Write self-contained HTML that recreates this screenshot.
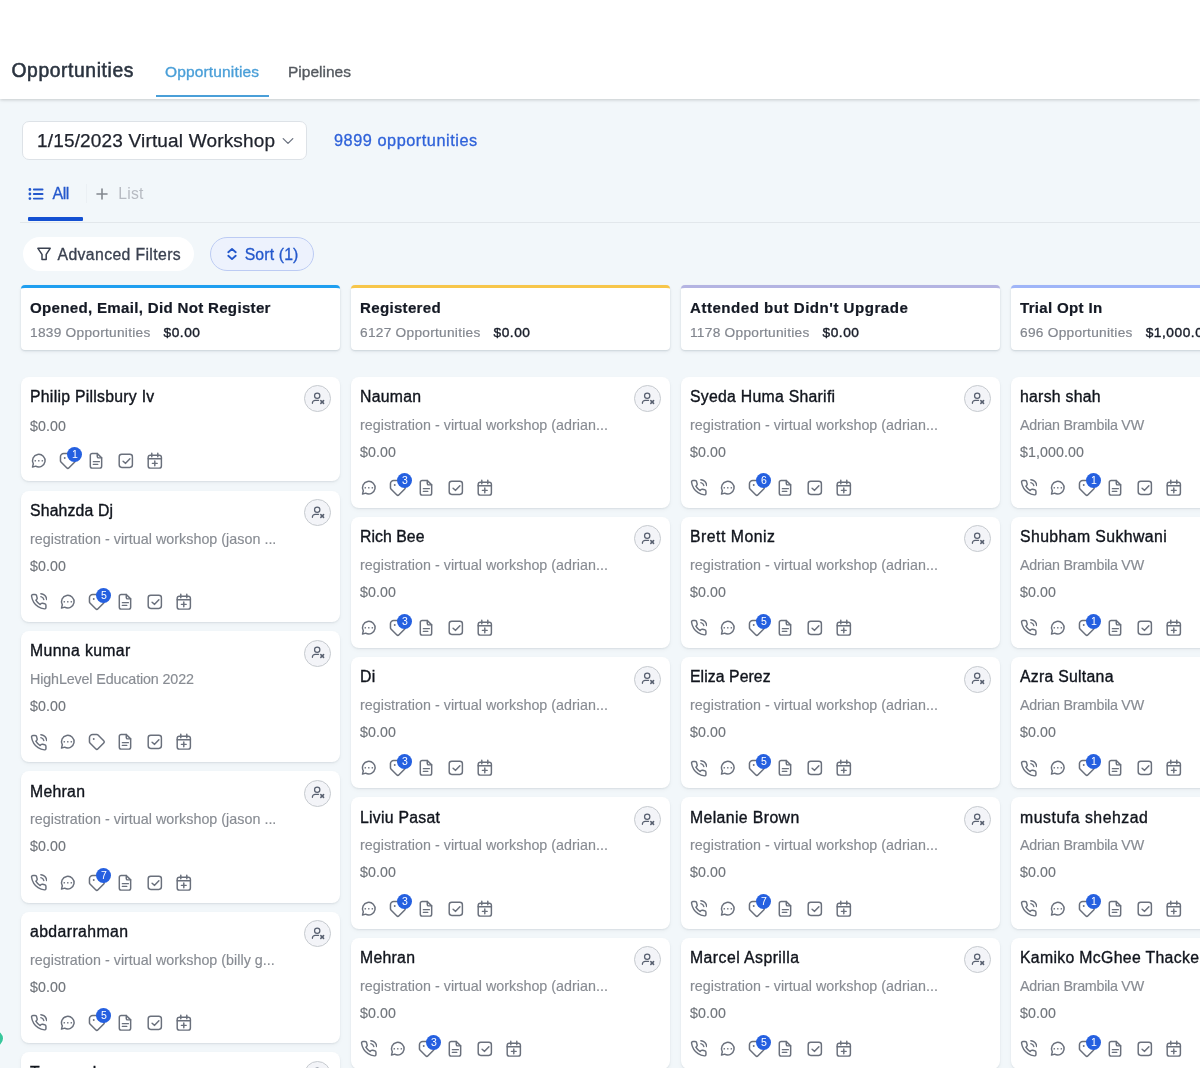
<!DOCTYPE html><html lang="en"><head><meta charset="utf-8"><title>Opportunities</title><style>
*{box-sizing:border-box;margin:0;padding:0}
html,body{width:1200px;height:1068px;overflow:hidden}
body{will-change:transform;background:#f2f7fa;font-family:"Liberation Sans",sans-serif;position:relative;color:#1f2937}
svg{fill:none;stroke:currentColor;stroke-linecap:round;stroke-linejoin:round}
.hdr{position:absolute;left:0;top:0;width:1200px;height:99px;background:#fff;box-shadow:0 1px 3px rgba(0,0,0,.15),0 2px 5px rgba(0,0,0,.04)}
.title{position:absolute;left:11.500px;top:58.500px;font-size:19.300px;line-height:24px;letter-spacing:.6px;color:#2b3440;-webkit-text-stroke:.55px #2b3440;white-space:nowrap}
.tab{position:absolute;top:61.900px;font-size:15.500px;line-height:20px;letter-spacing:.15px;color:#54595f;white-space:nowrap;-webkit-text-stroke:.35px currentColor}
.tab.act{left:165px;color:#4a9fd8}
.tab.t2{left:288px;letter-spacing:0}
.tul{position:absolute;left:156.300px;top:94.500px;width:113.200px;height:2.800px;background:#4a9fd8}
.sel{position:absolute;left:22px;top:120.500px;width:284.500px;height:39px;background:#fff;border:1px solid #dde2e7;border-radius:7px;color:#20242e}
.sel span{position:absolute;left:14px;top:7.400px;font-size:19px;line-height:24px;letter-spacing:.17px;white-space:nowrap;-webkit-text-stroke:.25px currentColor}
.sel svg{position:absolute;left:258.500px;top:13.700px;width:12px;height:12px;stroke:#6b7280;stroke-width:1.300}
.cnt{position:absolute;left:334px;top:130.100px;font-size:16.300px;line-height:20px;letter-spacing:.54px;color:#2f62d9;-webkit-text-stroke:.3px currentColor;white-space:nowrap}
.vt{position:absolute;top:183.600px;font-size:16px;line-height:20px;white-space:nowrap}
.vt svg{position:absolute;top:2px;width:16px;height:16px}
.vt.all{left:28.300px;color:#2458cc;-webkit-text-stroke:.3px currentColor}
.vt.all svg{left:0;top:2px}
.vt.all span{margin-left:24.200px;letter-spacing:-.5px}
.vt.lst{left:94px;color:#b7bbc2}
.vt.lst svg{left:0;top:2px;stroke:#83888f}
.vt.lst span{margin-left:24.300px;letter-spacing:.2px;font-size:15.700px}
.vsep{position:absolute;left:86px;top:184px;width:1px;height:19px;background:#ebf0f4}
.vul{position:absolute;left:27.600px;top:217.400px;width:55.400px;height:3.400px;background:#1450d2;border-radius:1px}
.vline{position:absolute;left:20px;top:221.700px;width:1180px;height:1px;background:#e2e7eb}
.pill{position:absolute;top:237px;height:33.500px;border-radius:17px;font-size:15.800px;white-space:nowrap}
.pill span{position:absolute;top:7.700px;line-height:20px;-webkit-text-stroke:.3px currentColor}
.pill svg{position:absolute}
.flt{left:22.800px;width:171.700px;background:#fff;color:#3a4150}
.flt svg{left:13.200px;top:9.200px;width:16px;height:16px;stroke-width:1.500}
.flt span{left:34.700px;letter-spacing:.37px}
.srt{left:210px;width:103.700px;background:#edf2fd;border:1px solid #bccbf3;color:#2458cc}
.srt svg{left:13px;top:8.300px;width:16px;height:16px}
.srt span{left:33.700px;top:6.700px;letter-spacing:.14px}
.board{position:absolute;left:0;top:0;width:1200px;height:1068px;overflow:hidden}
.col{position:absolute;top:285px;width:319.500px}
.ch{height:65px;background:#fff;border-top:3px solid #000;border-radius:4px;box-shadow:0 1px 2px rgba(40,60,80,.16),0 2px 4px rgba(40,60,80,.05);position:relative}
.ct{position:absolute;left:9.500px;top:9.700px;font-size:15.100px;font-weight:bold;line-height:20px;letter-spacing:.3px;color:#141924;-webkit-text-stroke:.2px currentColor;white-space:nowrap}
.cs{position:absolute;left:9.500px;top:35.600px;font-size:13.700px;line-height:18px;color:#83878f;white-space:nowrap;letter-spacing:.27px}
.cs span{-webkit-text-stroke:.2px currentColor}
.cs b{margin-left:13px;color:#171c28;font-weight:normal;-webkit-text-stroke:.4px #171c28;letter-spacing:.55px}
.cards{margin-top:26.600px}
.card{position:relative;height:131.200px;margin-bottom:9.100px;background:#fff;border-radius:8px;box-shadow:0 1px 2px rgba(40,60,80,.10),0 2px 5px rgba(40,60,80,.04)}
.card.nosub{height:104.800px;margin-bottom:9.400px}
.nm{position:absolute;left:9.500px;top:10.300px;font-size:15.800px;line-height:20px;letter-spacing:.27px;color:#10141c;white-space:nowrap;-webkit-text-stroke:.35px currentColor}
.sb{position:absolute;left:9.500px;top:39px;font-size:14.300px;line-height:18px;letter-spacing:.02px;color:#888c93;white-space:nowrap;-webkit-text-stroke:.15px currentColor}
.pr{position:absolute;left:9.500px;top:66px;font-size:14.200px;line-height:18px;letter-spacing:.1px;color:#71767c;white-space:nowrap;-webkit-text-stroke:.15px currentColor}
.nosub .pr{top:40.600px}
.ux{position:absolute;left:283.800px;top:8.600px;width:27px;height:27px;border-radius:14px;border:1px solid #c6cacf;background:#f3f4f8;color:#586070}
.ux svg{position:absolute;left:-.5px;top:-.5px;width:26px;height:26px;stroke-width:1.250}
.icons{position:absolute;left:0;top:101.100px;width:200px;height:20px}
.nosub .icons{top:74.700px}
.ic{position:absolute;color:#6a707c}
.bd{position:absolute;top:-4.300px;width:15px;height:15px;border-radius:8px;background:#2560e0;color:#fff;font-size:10.500px;line-height:15px;text-align:center;font-weight:normal}
.gdot{position:absolute;left:-12.200px;top:1030.900px;width:15px;height:15px;border-radius:8px;background:#38c79c;box-shadow:0 0 0 1px rgba(255,255,255,.6)}

</style></head><body>
<div class="hdr">
  <div class="title">Opportunities</div>
  <div class="tab act">Opportunities</div>
  <div class="tab t2">Pipelines</div>
  <div class="tul"></div>
</div>
<div class="sel"><span>1/15/2023 Virtual Workshop</span><svg viewBox="0 0 12 12"><path d="M1.200 3.600l4.800 4.800 4.800-4.800"/></svg></div>
<div class="cnt">9899 opportunities</div>
<div class="vt all"><svg viewBox="0 0 16 16"><path d="M5.800 3.500h8.800M5.800 8h8.800M5.800 12.600h8.800" stroke-width="1.800"/><path d="M1.900 3.500h.01M1.900 8h.01M1.900 12.600h.01" stroke-width="2.800"/></svg><span>All</span></div>
<div class="vsep"></div>
<div class="vt lst"><svg viewBox="0 0 16 16"><path d="M8 3v10M3 8h10" stroke-width="1.600"/></svg><span>List</span></div>
<div class="vul"></div>
<div class="vline"></div>
<div class="pill flt"><svg viewBox="0 0 16 16"><path d="M1.900 2.300h12.300L10.200 8.300v5.300H6V8.300z"/></svg><span>Advanced Filters</span></div>
<div class="pill srt"><svg viewBox="0 0 16 16"><path d="M4.300 6.200L8 2.900l3.700 3.300M4.300 9.800L8 13.100l3.700-3.300" stroke-width="1.900"/></svg><span>Sort (1)</span></div>

<div class="board">
<div class="col" style="left:20.5px">
<div class="ch" style="border-top-color:#1f9ff0"><div class="ct">Opened, Email, Did Not Register</div><div class="cs"><span>1839 Opportunities</span><b>$0.00</b></div></div>
<div class="cards">
<div class="card nosub"><div class="nm">Philip Pillsbury Iv</div><div class="ux"><svg viewBox="0 0 26 26"><circle cx="12.200" cy="9.700" r="2.650"/><path d="M7.400 17.300v-.2a2.800 2.800 0 0 1 2.800-2.800h3.400"/><path d="M15.800 14.600l2.800 2.800M18.600 14.600l-2.800 2.800" stroke-width="1.500"/></svg></div><div class="pr">$0.00</div><div class="icons"><svg class="ic" style="left:9.4px;top:1.2px;width:17.6px;height:17.6px" viewBox="0 0 24 24" stroke-width="2"><path d="M7.700 19.250A8.600 8.600 0 1 0 4.550 16.100L3.400 20.600z"/><path d="M7.200 11.900h.01M12 11.900h.01M16.800 11.900h.01" stroke-width="2.300"/></svg><svg class="ic" style="left:37.55px;top:0.15px;width:19.7px;height:19.7px" viewBox="0 0 24 24" stroke-width="1.85"><path d="M7 3h5c.512 0 1.024.195 1.414.586l7 7a2 2 0 0 1 0 2.828l-7 7a2 2 0 0 1-2.828 0l-7-7A1.994 1.994 0 0 1 3 12V7a4 4 0 0 1 4-4z"/><path d="M8.200 8.600h.01" stroke-width="2.300"/></svg><b class="bd" style="left:46.85px">1</b><svg class="ic" style="left:66.9px;top:1.2px;width:17.6px;height:17.6px" viewBox="0 0 24 24" stroke-width="2"><path d="M14 2H7a2.500 2.500 0 0 0-2.500 2.500v15A2.500 2.500 0 0 0 7 22h10.500a2.500 2.500 0 0 0 2.500-2.500V8z"/><path d="M14 2v4a2 2 0 0 0 2 2h4"/><path d="M8.700 13.200h8.200M8.700 16.900h6" stroke-width="1.900"/></svg><svg class="ic" style="left:96.4px;top:1.2px;width:17.6px;height:17.6px" viewBox="0 0 24 24" stroke-width="2"><rect x="3" y="3" width="18" height="18" rx="3.500"/><path d="M8.300 12.600l3.400 2.900L17.600 9.200"/></svg><svg class="ic" style="left:125.4px;top:1.2px;width:17.6px;height:17.6px" viewBox="0 0 24 24" stroke-width="2"><rect x="3" y="4.300" width="18" height="17.700" rx="3"/><path d="M7.900 1.800v4.600M16.100 1.800v4.600M3 9.200h18M12 12.200v6.600M8.700 15.500h6.600"/></svg></div></div>
<div class="card"><div class="nm" style="letter-spacing:0.16px">Shahzda Dj</div><div class="ux"><svg viewBox="0 0 26 26"><circle cx="12.200" cy="9.700" r="2.650"/><path d="M7.400 17.300v-.2a2.800 2.800 0 0 1 2.800-2.800h3.400"/><path d="M15.800 14.600l2.800 2.800M18.600 14.600l-2.800 2.800" stroke-width="1.500"/></svg></div><div class="sb">registration - virtual workshop (jason ...</div><div class="pr">$0.00</div><div class="icons"><svg class="ic" style="left:9.2px;top:1.5px;width:17.4px;height:17.4px" viewBox="0 0 24 24" stroke-width="2"><path d="M15.050 5A5 5 0 0 1 19 8.950M15.050 1A9 9 0 0 1 23 8.940m-1 7.980v3a2 2 0 0 1-2.180 2 19.790 19.790 0 0 1-8.630-3.070 19.500 19.500 0 0 1-6-6 19.790 19.790 0 0 1-3.070-8.670A2 2 0 0 1 4.110 2h3a2 2 0 0 1 2 1.720 12.840 12.840 0 0 0 .7 2.810 2 2 0 0 1-.45 2.110L8.090 9.910a16 16 0 0 0 6 6l1.270-1.270a2 2 0 0 1 2.110-.45 12.840 12.840 0 0 0 2.810.7A2 2 0 0 1 22 16.920z"/></svg><svg class="ic" style="left:38.4px;top:1.2px;width:17.6px;height:17.6px" viewBox="0 0 24 24" stroke-width="2"><path d="M7.700 19.250A8.600 8.600 0 1 0 4.550 16.100L3.400 20.600z"/><path d="M7.200 11.900h.01M12 11.900h.01M16.800 11.900h.01" stroke-width="2.300"/></svg><svg class="ic" style="left:66.55px;top:0.15px;width:19.7px;height:19.7px" viewBox="0 0 24 24" stroke-width="1.85"><path d="M7 3h5c.512 0 1.024.195 1.414.586l7 7a2 2 0 0 1 0 2.828l-7 7a2 2 0 0 1-2.828 0l-7-7A1.994 1.994 0 0 1 3 12V7a4 4 0 0 1 4-4z"/><path d="M8.200 8.600h.01" stroke-width="2.300"/></svg><b class="bd" style="left:75.85px">5</b><svg class="ic" style="left:95.9px;top:1.2px;width:17.6px;height:17.6px" viewBox="0 0 24 24" stroke-width="2"><path d="M14 2H7a2.500 2.500 0 0 0-2.500 2.500v15A2.500 2.500 0 0 0 7 22h10.500a2.500 2.500 0 0 0 2.500-2.500V8z"/><path d="M14 2v4a2 2 0 0 0 2 2h4"/><path d="M8.700 13.200h8.200M8.700 16.900h6" stroke-width="1.900"/></svg><svg class="ic" style="left:125.4px;top:1.2px;width:17.6px;height:17.6px" viewBox="0 0 24 24" stroke-width="2"><rect x="3" y="3" width="18" height="18" rx="3.500"/><path d="M8.300 12.600l3.400 2.900L17.600 9.200"/></svg><svg class="ic" style="left:154.4px;top:1.2px;width:17.6px;height:17.6px" viewBox="0 0 24 24" stroke-width="2"><rect x="3" y="4.300" width="18" height="17.700" rx="3"/><path d="M7.900 1.800v4.600M16.100 1.800v4.600M3 9.200h18M12 12.200v6.600M8.700 15.500h6.600"/></svg></div></div>
<div class="card"><div class="nm" style="letter-spacing:0.37px">Munna kumar</div><div class="ux"><svg viewBox="0 0 26 26"><circle cx="12.200" cy="9.700" r="2.650"/><path d="M7.400 17.300v-.2a2.800 2.800 0 0 1 2.800-2.800h3.400"/><path d="M15.800 14.600l2.800 2.800M18.600 14.600l-2.800 2.800" stroke-width="1.500"/></svg></div><div class="sb" style="letter-spacing:-0.13px">HighLevel Education 2022</div><div class="pr">$0.00</div><div class="icons"><svg class="ic" style="left:9.2px;top:1.5px;width:17.4px;height:17.4px" viewBox="0 0 24 24" stroke-width="2"><path d="M15.050 5A5 5 0 0 1 19 8.950M15.050 1A9 9 0 0 1 23 8.940m-1 7.980v3a2 2 0 0 1-2.180 2 19.790 19.790 0 0 1-8.630-3.070 19.500 19.500 0 0 1-6-6 19.790 19.790 0 0 1-3.070-8.670A2 2 0 0 1 4.110 2h3a2 2 0 0 1 2 1.720 12.840 12.840 0 0 0 .7 2.810 2 2 0 0 1-.45 2.110L8.090 9.910a16 16 0 0 0 6 6l1.270-1.270a2 2 0 0 1 2.110-.45 12.840 12.840 0 0 0 2.810.7A2 2 0 0 1 22 16.920z"/></svg><svg class="ic" style="left:38.4px;top:1.2px;width:17.6px;height:17.6px" viewBox="0 0 24 24" stroke-width="2"><path d="M7.700 19.250A8.600 8.600 0 1 0 4.550 16.100L3.400 20.600z"/><path d="M7.200 11.900h.01M12 11.900h.01M16.800 11.900h.01" stroke-width="2.300"/></svg><svg class="ic" style="left:66.55px;top:0.15px;width:19.7px;height:19.7px" viewBox="0 0 24 24" stroke-width="1.85"><path d="M7 3h5c.512 0 1.024.195 1.414.586l7 7a2 2 0 0 1 0 2.828l-7 7a2 2 0 0 1-2.828 0l-7-7A1.994 1.994 0 0 1 3 12V7a4 4 0 0 1 4-4z"/><path d="M8.200 8.600h.01" stroke-width="2.300"/></svg><svg class="ic" style="left:95.9px;top:1.2px;width:17.6px;height:17.6px" viewBox="0 0 24 24" stroke-width="2"><path d="M14 2H7a2.500 2.500 0 0 0-2.500 2.500v15A2.500 2.500 0 0 0 7 22h10.500a2.500 2.500 0 0 0 2.500-2.500V8z"/><path d="M14 2v4a2 2 0 0 0 2 2h4"/><path d="M8.700 13.200h8.200M8.700 16.900h6" stroke-width="1.900"/></svg><svg class="ic" style="left:125.4px;top:1.2px;width:17.6px;height:17.6px" viewBox="0 0 24 24" stroke-width="2"><rect x="3" y="3" width="18" height="18" rx="3.500"/><path d="M8.300 12.600l3.400 2.900L17.600 9.200"/></svg><svg class="ic" style="left:154.4px;top:1.2px;width:17.6px;height:17.6px" viewBox="0 0 24 24" stroke-width="2"><rect x="3" y="4.300" width="18" height="17.700" rx="3"/><path d="M7.900 1.800v4.600M16.100 1.800v4.600M3 9.200h18M12 12.200v6.600M8.700 15.500h6.600"/></svg></div></div>
<div class="card"><div class="nm">Mehran</div><div class="ux"><svg viewBox="0 0 26 26"><circle cx="12.200" cy="9.700" r="2.650"/><path d="M7.400 17.300v-.2a2.800 2.800 0 0 1 2.800-2.800h3.400"/><path d="M15.800 14.600l2.800 2.800M18.600 14.600l-2.800 2.800" stroke-width="1.500"/></svg></div><div class="sb">registration - virtual workshop (jason ...</div><div class="pr">$0.00</div><div class="icons"><svg class="ic" style="left:9.2px;top:1.5px;width:17.4px;height:17.4px" viewBox="0 0 24 24" stroke-width="2"><path d="M15.050 5A5 5 0 0 1 19 8.950M15.050 1A9 9 0 0 1 23 8.940m-1 7.980v3a2 2 0 0 1-2.180 2 19.790 19.790 0 0 1-8.630-3.070 19.500 19.500 0 0 1-6-6 19.790 19.790 0 0 1-3.070-8.670A2 2 0 0 1 4.110 2h3a2 2 0 0 1 2 1.720 12.840 12.840 0 0 0 .7 2.810 2 2 0 0 1-.45 2.110L8.090 9.910a16 16 0 0 0 6 6l1.270-1.270a2 2 0 0 1 2.110-.45 12.840 12.840 0 0 0 2.810.7A2 2 0 0 1 22 16.920z"/></svg><svg class="ic" style="left:38.4px;top:1.2px;width:17.6px;height:17.6px" viewBox="0 0 24 24" stroke-width="2"><path d="M7.700 19.250A8.600 8.600 0 1 0 4.550 16.100L3.400 20.600z"/><path d="M7.200 11.900h.01M12 11.900h.01M16.800 11.900h.01" stroke-width="2.300"/></svg><svg class="ic" style="left:66.55px;top:0.15px;width:19.7px;height:19.7px" viewBox="0 0 24 24" stroke-width="1.85"><path d="M7 3h5c.512 0 1.024.195 1.414.586l7 7a2 2 0 0 1 0 2.828l-7 7a2 2 0 0 1-2.828 0l-7-7A1.994 1.994 0 0 1 3 12V7a4 4 0 0 1 4-4z"/><path d="M8.200 8.600h.01" stroke-width="2.300"/></svg><b class="bd" style="left:75.85px">7</b><svg class="ic" style="left:95.9px;top:1.2px;width:17.6px;height:17.6px" viewBox="0 0 24 24" stroke-width="2"><path d="M14 2H7a2.500 2.500 0 0 0-2.500 2.500v15A2.500 2.500 0 0 0 7 22h10.500a2.500 2.500 0 0 0 2.500-2.500V8z"/><path d="M14 2v4a2 2 0 0 0 2 2h4"/><path d="M8.700 13.200h8.200M8.700 16.900h6" stroke-width="1.900"/></svg><svg class="ic" style="left:125.4px;top:1.2px;width:17.6px;height:17.6px" viewBox="0 0 24 24" stroke-width="2"><rect x="3" y="3" width="18" height="18" rx="3.500"/><path d="M8.300 12.600l3.400 2.900L17.600 9.200"/></svg><svg class="ic" style="left:154.4px;top:1.2px;width:17.6px;height:17.6px" viewBox="0 0 24 24" stroke-width="2"><rect x="3" y="4.300" width="18" height="17.700" rx="3"/><path d="M7.900 1.800v4.600M16.100 1.800v4.600M3 9.200h18M12 12.200v6.600M8.700 15.500h6.600"/></svg></div></div>
<div class="card"><div class="nm" style="letter-spacing:0.4px">abdarrahman</div><div class="ux"><svg viewBox="0 0 26 26"><circle cx="12.200" cy="9.700" r="2.650"/><path d="M7.400 17.300v-.2a2.800 2.800 0 0 1 2.800-2.800h3.400"/><path d="M15.800 14.600l2.800 2.800M18.600 14.600l-2.800 2.800" stroke-width="1.500"/></svg></div><div class="sb">registration - virtual workshop (billy g...</div><div class="pr">$0.00</div><div class="icons"><svg class="ic" style="left:9.2px;top:1.5px;width:17.4px;height:17.4px" viewBox="0 0 24 24" stroke-width="2"><path d="M15.050 5A5 5 0 0 1 19 8.950M15.050 1A9 9 0 0 1 23 8.940m-1 7.980v3a2 2 0 0 1-2.180 2 19.790 19.790 0 0 1-8.630-3.070 19.500 19.500 0 0 1-6-6 19.790 19.790 0 0 1-3.070-8.670A2 2 0 0 1 4.110 2h3a2 2 0 0 1 2 1.720 12.840 12.840 0 0 0 .7 2.810 2 2 0 0 1-.45 2.110L8.090 9.910a16 16 0 0 0 6 6l1.270-1.270a2 2 0 0 1 2.110-.45 12.840 12.840 0 0 0 2.810.7A2 2 0 0 1 22 16.920z"/></svg><svg class="ic" style="left:38.4px;top:1.2px;width:17.6px;height:17.6px" viewBox="0 0 24 24" stroke-width="2"><path d="M7.700 19.250A8.600 8.600 0 1 0 4.550 16.100L3.400 20.600z"/><path d="M7.200 11.900h.01M12 11.900h.01M16.800 11.900h.01" stroke-width="2.300"/></svg><svg class="ic" style="left:66.55px;top:0.15px;width:19.7px;height:19.7px" viewBox="0 0 24 24" stroke-width="1.85"><path d="M7 3h5c.512 0 1.024.195 1.414.586l7 7a2 2 0 0 1 0 2.828l-7 7a2 2 0 0 1-2.828 0l-7-7A1.994 1.994 0 0 1 3 12V7a4 4 0 0 1 4-4z"/><path d="M8.200 8.600h.01" stroke-width="2.300"/></svg><b class="bd" style="left:75.85px">5</b><svg class="ic" style="left:95.9px;top:1.2px;width:17.6px;height:17.6px" viewBox="0 0 24 24" stroke-width="2"><path d="M14 2H7a2.500 2.500 0 0 0-2.500 2.500v15A2.500 2.500 0 0 0 7 22h10.500a2.500 2.500 0 0 0 2.500-2.500V8z"/><path d="M14 2v4a2 2 0 0 0 2 2h4"/><path d="M8.700 13.200h8.200M8.700 16.900h6" stroke-width="1.900"/></svg><svg class="ic" style="left:125.4px;top:1.2px;width:17.6px;height:17.6px" viewBox="0 0 24 24" stroke-width="2"><rect x="3" y="3" width="18" height="18" rx="3.500"/><path d="M8.300 12.600l3.400 2.900L17.600 9.200"/></svg><svg class="ic" style="left:154.4px;top:1.2px;width:17.6px;height:17.6px" viewBox="0 0 24 24" stroke-width="2"><rect x="3" y="4.300" width="18" height="17.700" rx="3"/><path d="M7.900 1.800v4.600M16.100 1.800v4.600M3 9.200h18M12 12.200v6.600M8.700 15.500h6.600"/></svg></div></div>
<div class="card"><div class="nm" style="top:11.400px">Tanveer kaur</div><div class="ux"><svg viewBox="0 0 26 26"><circle cx="12.200" cy="9.700" r="2.650"/><path d="M7.400 17.300v-.2a2.800 2.800 0 0 1 2.800-2.800h3.400"/><path d="M15.800 14.600l2.800 2.800M18.600 14.600l-2.800 2.800" stroke-width="1.500"/></svg></div><div class="sb">registration - virtual workshop (jason ...</div><div class="pr">$0.00</div><div class="icons"><svg class="ic" style="left:9.2px;top:1.5px;width:17.4px;height:17.4px" viewBox="0 0 24 24" stroke-width="2"><path d="M15.050 5A5 5 0 0 1 19 8.950M15.050 1A9 9 0 0 1 23 8.940m-1 7.980v3a2 2 0 0 1-2.180 2 19.790 19.790 0 0 1-8.630-3.070 19.500 19.500 0 0 1-6-6 19.790 19.790 0 0 1-3.070-8.670A2 2 0 0 1 4.110 2h3a2 2 0 0 1 2 1.720 12.840 12.840 0 0 0 .7 2.810 2 2 0 0 1-.45 2.110L8.090 9.910a16 16 0 0 0 6 6l1.270-1.270a2 2 0 0 1 2.110-.45 12.840 12.840 0 0 0 2.810.7A2 2 0 0 1 22 16.920z"/></svg><svg class="ic" style="left:38.4px;top:1.2px;width:17.6px;height:17.6px" viewBox="0 0 24 24" stroke-width="2"><path d="M7.700 19.250A8.600 8.600 0 1 0 4.550 16.100L3.400 20.600z"/><path d="M7.200 11.900h.01M12 11.900h.01M16.800 11.900h.01" stroke-width="2.300"/></svg><svg class="ic" style="left:66.55px;top:0.15px;width:19.7px;height:19.7px" viewBox="0 0 24 24" stroke-width="1.85"><path d="M7 3h5c.512 0 1.024.195 1.414.586l7 7a2 2 0 0 1 0 2.828l-7 7a2 2 0 0 1-2.828 0l-7-7A1.994 1.994 0 0 1 3 12V7a4 4 0 0 1 4-4z"/><path d="M8.200 8.600h.01" stroke-width="2.300"/></svg><b class="bd" style="left:75.85px">5</b><svg class="ic" style="left:95.9px;top:1.2px;width:17.6px;height:17.6px" viewBox="0 0 24 24" stroke-width="2"><path d="M14 2H7a2.500 2.500 0 0 0-2.500 2.500v15A2.500 2.500 0 0 0 7 22h10.500a2.500 2.500 0 0 0 2.500-2.500V8z"/><path d="M14 2v4a2 2 0 0 0 2 2h4"/><path d="M8.700 13.200h8.200M8.700 16.900h6" stroke-width="1.900"/></svg><svg class="ic" style="left:125.4px;top:1.2px;width:17.6px;height:17.6px" viewBox="0 0 24 24" stroke-width="2"><rect x="3" y="3" width="18" height="18" rx="3.500"/><path d="M8.300 12.600l3.400 2.900L17.600 9.200"/></svg><svg class="ic" style="left:154.4px;top:1.2px;width:17.6px;height:17.6px" viewBox="0 0 24 24" stroke-width="2"><rect x="3" y="4.300" width="18" height="17.700" rx="3"/><path d="M7.900 1.800v4.600M16.100 1.800v4.600M3 9.200h18M12 12.200v6.600M8.700 15.500h6.600"/></svg></div></div>
</div></div>
<div class="col" style="left:350.5px">
<div class="ch" style="border-top-color:#f7c64a"><div class="ct">Registered</div><div class="cs"><span>6127 Opportunities</span><b>$0.00</b></div></div>
<div class="cards">
<div class="card"><div class="nm">Nauman</div><div class="ux"><svg viewBox="0 0 26 26"><circle cx="12.200" cy="9.700" r="2.650"/><path d="M7.400 17.300v-.2a2.800 2.800 0 0 1 2.800-2.800h3.400"/><path d="M15.800 14.600l2.800 2.800M18.600 14.600l-2.800 2.800" stroke-width="1.500"/></svg></div><div class="sb">registration - virtual workshop (adrian...</div><div class="pr">$0.00</div><div class="icons"><svg class="ic" style="left:9.4px;top:1.2px;width:17.6px;height:17.6px" viewBox="0 0 24 24" stroke-width="2"><path d="M7.700 19.250A8.600 8.600 0 1 0 4.550 16.100L3.400 20.600z"/><path d="M7.200 11.900h.01M12 11.900h.01M16.800 11.900h.01" stroke-width="2.300"/></svg><svg class="ic" style="left:37.55px;top:0.15px;width:19.7px;height:19.7px" viewBox="0 0 24 24" stroke-width="1.85"><path d="M7 3h5c.512 0 1.024.195 1.414.586l7 7a2 2 0 0 1 0 2.828l-7 7a2 2 0 0 1-2.828 0l-7-7A1.994 1.994 0 0 1 3 12V7a4 4 0 0 1 4-4z"/><path d="M8.200 8.600h.01" stroke-width="2.300"/></svg><b class="bd" style="left:46.85px">3</b><svg class="ic" style="left:66.9px;top:1.2px;width:17.6px;height:17.6px" viewBox="0 0 24 24" stroke-width="2"><path d="M14 2H7a2.500 2.500 0 0 0-2.500 2.500v15A2.500 2.500 0 0 0 7 22h10.500a2.500 2.500 0 0 0 2.500-2.500V8z"/><path d="M14 2v4a2 2 0 0 0 2 2h4"/><path d="M8.700 13.200h8.200M8.700 16.900h6" stroke-width="1.900"/></svg><svg class="ic" style="left:96.4px;top:1.2px;width:17.6px;height:17.6px" viewBox="0 0 24 24" stroke-width="2"><rect x="3" y="3" width="18" height="18" rx="3.500"/><path d="M8.300 12.600l3.400 2.900L17.600 9.200"/></svg><svg class="ic" style="left:125.4px;top:1.2px;width:17.6px;height:17.6px" viewBox="0 0 24 24" stroke-width="2"><rect x="3" y="4.300" width="18" height="17.700" rx="3"/><path d="M7.900 1.800v4.600M16.100 1.800v4.600M3 9.200h18M12 12.200v6.600M8.700 15.500h6.600"/></svg></div></div>
<div class="card"><div class="nm" style="letter-spacing:0.05px">Rich Bee</div><div class="ux"><svg viewBox="0 0 26 26"><circle cx="12.200" cy="9.700" r="2.650"/><path d="M7.400 17.300v-.2a2.800 2.800 0 0 1 2.800-2.800h3.400"/><path d="M15.800 14.600l2.800 2.800M18.600 14.600l-2.800 2.800" stroke-width="1.500"/></svg></div><div class="sb">registration - virtual workshop (adrian...</div><div class="pr">$0.00</div><div class="icons"><svg class="ic" style="left:9.4px;top:1.2px;width:17.6px;height:17.6px" viewBox="0 0 24 24" stroke-width="2"><path d="M7.700 19.250A8.600 8.600 0 1 0 4.550 16.100L3.400 20.600z"/><path d="M7.200 11.900h.01M12 11.900h.01M16.800 11.900h.01" stroke-width="2.300"/></svg><svg class="ic" style="left:37.55px;top:0.15px;width:19.7px;height:19.7px" viewBox="0 0 24 24" stroke-width="1.85"><path d="M7 3h5c.512 0 1.024.195 1.414.586l7 7a2 2 0 0 1 0 2.828l-7 7a2 2 0 0 1-2.828 0l-7-7A1.994 1.994 0 0 1 3 12V7a4 4 0 0 1 4-4z"/><path d="M8.200 8.600h.01" stroke-width="2.300"/></svg><b class="bd" style="left:46.85px">3</b><svg class="ic" style="left:66.9px;top:1.2px;width:17.6px;height:17.6px" viewBox="0 0 24 24" stroke-width="2"><path d="M14 2H7a2.500 2.500 0 0 0-2.500 2.500v15A2.500 2.500 0 0 0 7 22h10.500a2.500 2.500 0 0 0 2.500-2.500V8z"/><path d="M14 2v4a2 2 0 0 0 2 2h4"/><path d="M8.700 13.200h8.200M8.700 16.900h6" stroke-width="1.900"/></svg><svg class="ic" style="left:96.4px;top:1.2px;width:17.6px;height:17.6px" viewBox="0 0 24 24" stroke-width="2"><rect x="3" y="3" width="18" height="18" rx="3.500"/><path d="M8.300 12.600l3.400 2.900L17.600 9.200"/></svg><svg class="ic" style="left:125.4px;top:1.2px;width:17.6px;height:17.6px" viewBox="0 0 24 24" stroke-width="2"><rect x="3" y="4.300" width="18" height="17.700" rx="3"/><path d="M7.900 1.800v4.600M16.100 1.800v4.600M3 9.200h18M12 12.200v6.600M8.700 15.500h6.600"/></svg></div></div>
<div class="card"><div class="nm">Di</div><div class="ux"><svg viewBox="0 0 26 26"><circle cx="12.200" cy="9.700" r="2.650"/><path d="M7.400 17.300v-.2a2.800 2.800 0 0 1 2.800-2.800h3.400"/><path d="M15.800 14.600l2.800 2.800M18.600 14.600l-2.800 2.800" stroke-width="1.500"/></svg></div><div class="sb">registration - virtual workshop (adrian...</div><div class="pr">$0.00</div><div class="icons"><svg class="ic" style="left:9.4px;top:1.2px;width:17.6px;height:17.6px" viewBox="0 0 24 24" stroke-width="2"><path d="M7.700 19.250A8.600 8.600 0 1 0 4.550 16.100L3.400 20.600z"/><path d="M7.200 11.900h.01M12 11.900h.01M16.800 11.900h.01" stroke-width="2.300"/></svg><svg class="ic" style="left:37.55px;top:0.15px;width:19.7px;height:19.7px" viewBox="0 0 24 24" stroke-width="1.85"><path d="M7 3h5c.512 0 1.024.195 1.414.586l7 7a2 2 0 0 1 0 2.828l-7 7a2 2 0 0 1-2.828 0l-7-7A1.994 1.994 0 0 1 3 12V7a4 4 0 0 1 4-4z"/><path d="M8.200 8.600h.01" stroke-width="2.300"/></svg><b class="bd" style="left:46.85px">3</b><svg class="ic" style="left:66.9px;top:1.2px;width:17.6px;height:17.6px" viewBox="0 0 24 24" stroke-width="2"><path d="M14 2H7a2.500 2.500 0 0 0-2.500 2.500v15A2.500 2.500 0 0 0 7 22h10.500a2.500 2.500 0 0 0 2.500-2.500V8z"/><path d="M14 2v4a2 2 0 0 0 2 2h4"/><path d="M8.700 13.200h8.200M8.700 16.900h6" stroke-width="1.900"/></svg><svg class="ic" style="left:96.4px;top:1.2px;width:17.6px;height:17.6px" viewBox="0 0 24 24" stroke-width="2"><rect x="3" y="3" width="18" height="18" rx="3.500"/><path d="M8.300 12.600l3.400 2.900L17.600 9.200"/></svg><svg class="ic" style="left:125.4px;top:1.2px;width:17.6px;height:17.6px" viewBox="0 0 24 24" stroke-width="2"><rect x="3" y="4.300" width="18" height="17.700" rx="3"/><path d="M7.900 1.800v4.600M16.100 1.800v4.600M3 9.200h18M12 12.200v6.600M8.700 15.500h6.600"/></svg></div></div>
<div class="card"><div class="nm">Liviu Pasat</div><div class="ux"><svg viewBox="0 0 26 26"><circle cx="12.200" cy="9.700" r="2.650"/><path d="M7.400 17.300v-.2a2.800 2.800 0 0 1 2.800-2.800h3.400"/><path d="M15.800 14.600l2.800 2.800M18.600 14.600l-2.800 2.800" stroke-width="1.500"/></svg></div><div class="sb">registration - virtual workshop (adrian...</div><div class="pr">$0.00</div><div class="icons"><svg class="ic" style="left:9.4px;top:1.2px;width:17.6px;height:17.6px" viewBox="0 0 24 24" stroke-width="2"><path d="M7.700 19.250A8.600 8.600 0 1 0 4.550 16.100L3.400 20.600z"/><path d="M7.200 11.900h.01M12 11.900h.01M16.800 11.900h.01" stroke-width="2.300"/></svg><svg class="ic" style="left:37.55px;top:0.15px;width:19.7px;height:19.7px" viewBox="0 0 24 24" stroke-width="1.85"><path d="M7 3h5c.512 0 1.024.195 1.414.586l7 7a2 2 0 0 1 0 2.828l-7 7a2 2 0 0 1-2.828 0l-7-7A1.994 1.994 0 0 1 3 12V7a4 4 0 0 1 4-4z"/><path d="M8.200 8.600h.01" stroke-width="2.300"/></svg><b class="bd" style="left:46.85px">3</b><svg class="ic" style="left:66.9px;top:1.2px;width:17.6px;height:17.6px" viewBox="0 0 24 24" stroke-width="2"><path d="M14 2H7a2.500 2.500 0 0 0-2.500 2.500v15A2.500 2.500 0 0 0 7 22h10.500a2.500 2.500 0 0 0 2.500-2.500V8z"/><path d="M14 2v4a2 2 0 0 0 2 2h4"/><path d="M8.700 13.200h8.200M8.700 16.900h6" stroke-width="1.900"/></svg><svg class="ic" style="left:96.4px;top:1.2px;width:17.6px;height:17.6px" viewBox="0 0 24 24" stroke-width="2"><rect x="3" y="3" width="18" height="18" rx="3.500"/><path d="M8.300 12.600l3.400 2.900L17.600 9.200"/></svg><svg class="ic" style="left:125.4px;top:1.2px;width:17.6px;height:17.6px" viewBox="0 0 24 24" stroke-width="2"><rect x="3" y="4.300" width="18" height="17.700" rx="3"/><path d="M7.900 1.800v4.600M16.100 1.800v4.600M3 9.200h18M12 12.200v6.600M8.700 15.500h6.600"/></svg></div></div>
<div class="card"><div class="nm">Mehran</div><div class="ux"><svg viewBox="0 0 26 26"><circle cx="12.200" cy="9.700" r="2.650"/><path d="M7.400 17.300v-.2a2.800 2.800 0 0 1 2.800-2.800h3.400"/><path d="M15.800 14.600l2.800 2.800M18.600 14.600l-2.800 2.800" stroke-width="1.500"/></svg></div><div class="sb">registration - virtual workshop (adrian...</div><div class="pr">$0.00</div><div class="icons"><svg class="ic" style="left:9.2px;top:1.5px;width:17.4px;height:17.4px" viewBox="0 0 24 24" stroke-width="2"><path d="M15.050 5A5 5 0 0 1 19 8.950M15.050 1A9 9 0 0 1 23 8.940m-1 7.980v3a2 2 0 0 1-2.180 2 19.790 19.790 0 0 1-8.630-3.070 19.500 19.500 0 0 1-6-6 19.790 19.790 0 0 1-3.070-8.670A2 2 0 0 1 4.110 2h3a2 2 0 0 1 2 1.720 12.840 12.840 0 0 0 .7 2.810 2 2 0 0 1-.45 2.110L8.090 9.910a16 16 0 0 0 6 6l1.270-1.270a2 2 0 0 1 2.110-.45 12.840 12.840 0 0 0 2.810.7A2 2 0 0 1 22 16.920z"/></svg><svg class="ic" style="left:38.4px;top:1.2px;width:17.6px;height:17.6px" viewBox="0 0 24 24" stroke-width="2"><path d="M7.700 19.250A8.600 8.600 0 1 0 4.550 16.100L3.400 20.600z"/><path d="M7.200 11.900h.01M12 11.900h.01M16.800 11.900h.01" stroke-width="2.300"/></svg><svg class="ic" style="left:66.55px;top:0.15px;width:19.7px;height:19.7px" viewBox="0 0 24 24" stroke-width="1.85"><path d="M7 3h5c.512 0 1.024.195 1.414.586l7 7a2 2 0 0 1 0 2.828l-7 7a2 2 0 0 1-2.828 0l-7-7A1.994 1.994 0 0 1 3 12V7a4 4 0 0 1 4-4z"/><path d="M8.200 8.600h.01" stroke-width="2.300"/></svg><b class="bd" style="left:75.85px">3</b><svg class="ic" style="left:95.9px;top:1.2px;width:17.6px;height:17.6px" viewBox="0 0 24 24" stroke-width="2"><path d="M14 2H7a2.500 2.500 0 0 0-2.500 2.500v15A2.500 2.500 0 0 0 7 22h10.500a2.500 2.500 0 0 0 2.500-2.500V8z"/><path d="M14 2v4a2 2 0 0 0 2 2h4"/><path d="M8.700 13.200h8.200M8.700 16.900h6" stroke-width="1.900"/></svg><svg class="ic" style="left:125.4px;top:1.2px;width:17.6px;height:17.6px" viewBox="0 0 24 24" stroke-width="2"><rect x="3" y="3" width="18" height="18" rx="3.500"/><path d="M8.300 12.600l3.400 2.900L17.600 9.200"/></svg><svg class="ic" style="left:154.4px;top:1.2px;width:17.6px;height:17.6px" viewBox="0 0 24 24" stroke-width="2"><rect x="3" y="4.300" width="18" height="17.700" rx="3"/><path d="M7.900 1.800v4.600M16.100 1.800v4.600M3 9.200h18M12 12.200v6.600M8.700 15.500h6.600"/></svg></div></div>
</div></div>
<div class="col" style="left:680.5px">
<div class="ch" style="border-top-color:#b4b4e2"><div class="ct" style="letter-spacing:.5px">Attended but Didn't Upgrade</div><div class="cs"><span>1178 Opportunities</span><b>$0.00</b></div></div>
<div class="cards">
<div class="card"><div class="nm">Syeda Huma Sharifi</div><div class="ux"><svg viewBox="0 0 26 26"><circle cx="12.200" cy="9.700" r="2.650"/><path d="M7.400 17.300v-.2a2.800 2.800 0 0 1 2.800-2.800h3.400"/><path d="M15.800 14.600l2.800 2.800M18.600 14.600l-2.800 2.800" stroke-width="1.500"/></svg></div><div class="sb">registration - virtual workshop (adrian...</div><div class="pr">$0.00</div><div class="icons"><svg class="ic" style="left:9.2px;top:1.5px;width:17.4px;height:17.4px" viewBox="0 0 24 24" stroke-width="2"><path d="M15.050 5A5 5 0 0 1 19 8.950M15.050 1A9 9 0 0 1 23 8.940m-1 7.980v3a2 2 0 0 1-2.180 2 19.790 19.790 0 0 1-8.630-3.070 19.500 19.500 0 0 1-6-6 19.790 19.790 0 0 1-3.070-8.670A2 2 0 0 1 4.110 2h3a2 2 0 0 1 2 1.720 12.840 12.840 0 0 0 .7 2.810 2 2 0 0 1-.45 2.110L8.090 9.910a16 16 0 0 0 6 6l1.270-1.270a2 2 0 0 1 2.110-.45 12.840 12.840 0 0 0 2.810.7A2 2 0 0 1 22 16.920z"/></svg><svg class="ic" style="left:38.4px;top:1.2px;width:17.6px;height:17.6px" viewBox="0 0 24 24" stroke-width="2"><path d="M7.700 19.250A8.600 8.600 0 1 0 4.550 16.100L3.400 20.600z"/><path d="M7.200 11.900h.01M12 11.900h.01M16.800 11.900h.01" stroke-width="2.300"/></svg><svg class="ic" style="left:66.55px;top:0.15px;width:19.7px;height:19.7px" viewBox="0 0 24 24" stroke-width="1.85"><path d="M7 3h5c.512 0 1.024.195 1.414.586l7 7a2 2 0 0 1 0 2.828l-7 7a2 2 0 0 1-2.828 0l-7-7A1.994 1.994 0 0 1 3 12V7a4 4 0 0 1 4-4z"/><path d="M8.200 8.600h.01" stroke-width="2.300"/></svg><b class="bd" style="left:75.85px">6</b><svg class="ic" style="left:95.9px;top:1.2px;width:17.6px;height:17.6px" viewBox="0 0 24 24" stroke-width="2"><path d="M14 2H7a2.500 2.500 0 0 0-2.500 2.500v15A2.500 2.500 0 0 0 7 22h10.500a2.500 2.500 0 0 0 2.500-2.500V8z"/><path d="M14 2v4a2 2 0 0 0 2 2h4"/><path d="M8.700 13.200h8.200M8.700 16.900h6" stroke-width="1.900"/></svg><svg class="ic" style="left:125.4px;top:1.2px;width:17.6px;height:17.6px" viewBox="0 0 24 24" stroke-width="2"><rect x="3" y="3" width="18" height="18" rx="3.500"/><path d="M8.300 12.600l3.400 2.900L17.600 9.200"/></svg><svg class="ic" style="left:154.4px;top:1.2px;width:17.6px;height:17.6px" viewBox="0 0 24 24" stroke-width="2"><rect x="3" y="4.300" width="18" height="17.700" rx="3"/><path d="M7.900 1.800v4.600M16.100 1.800v4.600M3 9.200h18M12 12.200v6.600M8.700 15.500h6.600"/></svg></div></div>
<div class="card"><div class="nm" style="letter-spacing:0.51px">Brett Moniz</div><div class="ux"><svg viewBox="0 0 26 26"><circle cx="12.200" cy="9.700" r="2.650"/><path d="M7.400 17.300v-.2a2.800 2.800 0 0 1 2.800-2.800h3.400"/><path d="M15.800 14.600l2.800 2.800M18.600 14.600l-2.800 2.800" stroke-width="1.500"/></svg></div><div class="sb">registration - virtual workshop (adrian...</div><div class="pr">$0.00</div><div class="icons"><svg class="ic" style="left:9.2px;top:1.5px;width:17.4px;height:17.4px" viewBox="0 0 24 24" stroke-width="2"><path d="M15.050 5A5 5 0 0 1 19 8.950M15.050 1A9 9 0 0 1 23 8.940m-1 7.980v3a2 2 0 0 1-2.180 2 19.790 19.790 0 0 1-8.630-3.070 19.500 19.500 0 0 1-6-6 19.790 19.790 0 0 1-3.070-8.670A2 2 0 0 1 4.110 2h3a2 2 0 0 1 2 1.720 12.840 12.840 0 0 0 .7 2.810 2 2 0 0 1-.45 2.110L8.090 9.910a16 16 0 0 0 6 6l1.270-1.270a2 2 0 0 1 2.110-.45 12.840 12.840 0 0 0 2.810.7A2 2 0 0 1 22 16.920z"/></svg><svg class="ic" style="left:38.4px;top:1.2px;width:17.6px;height:17.6px" viewBox="0 0 24 24" stroke-width="2"><path d="M7.700 19.250A8.600 8.600 0 1 0 4.550 16.100L3.400 20.600z"/><path d="M7.200 11.900h.01M12 11.900h.01M16.800 11.900h.01" stroke-width="2.300"/></svg><svg class="ic" style="left:66.55px;top:0.15px;width:19.7px;height:19.7px" viewBox="0 0 24 24" stroke-width="1.85"><path d="M7 3h5c.512 0 1.024.195 1.414.586l7 7a2 2 0 0 1 0 2.828l-7 7a2 2 0 0 1-2.828 0l-7-7A1.994 1.994 0 0 1 3 12V7a4 4 0 0 1 4-4z"/><path d="M8.200 8.600h.01" stroke-width="2.300"/></svg><b class="bd" style="left:75.85px">5</b><svg class="ic" style="left:95.9px;top:1.2px;width:17.6px;height:17.6px" viewBox="0 0 24 24" stroke-width="2"><path d="M14 2H7a2.500 2.500 0 0 0-2.500 2.500v15A2.500 2.500 0 0 0 7 22h10.500a2.500 2.500 0 0 0 2.500-2.500V8z"/><path d="M14 2v4a2 2 0 0 0 2 2h4"/><path d="M8.700 13.200h8.200M8.700 16.900h6" stroke-width="1.900"/></svg><svg class="ic" style="left:125.4px;top:1.2px;width:17.6px;height:17.6px" viewBox="0 0 24 24" stroke-width="2"><rect x="3" y="3" width="18" height="18" rx="3.500"/><path d="M8.300 12.600l3.400 2.900L17.600 9.200"/></svg><svg class="ic" style="left:154.4px;top:1.2px;width:17.6px;height:17.6px" viewBox="0 0 24 24" stroke-width="2"><rect x="3" y="4.300" width="18" height="17.700" rx="3"/><path d="M7.900 1.800v4.600M16.100 1.800v4.600M3 9.200h18M12 12.200v6.600M8.700 15.500h6.600"/></svg></div></div>
<div class="card"><div class="nm" style="letter-spacing:0.07px">Eliza Perez</div><div class="ux"><svg viewBox="0 0 26 26"><circle cx="12.200" cy="9.700" r="2.650"/><path d="M7.400 17.300v-.2a2.800 2.800 0 0 1 2.800-2.800h3.400"/><path d="M15.800 14.600l2.800 2.800M18.600 14.600l-2.800 2.800" stroke-width="1.500"/></svg></div><div class="sb">registration - virtual workshop (adrian...</div><div class="pr">$0.00</div><div class="icons"><svg class="ic" style="left:9.2px;top:1.5px;width:17.4px;height:17.4px" viewBox="0 0 24 24" stroke-width="2"><path d="M15.050 5A5 5 0 0 1 19 8.950M15.050 1A9 9 0 0 1 23 8.940m-1 7.980v3a2 2 0 0 1-2.180 2 19.790 19.790 0 0 1-8.630-3.070 19.500 19.500 0 0 1-6-6 19.790 19.790 0 0 1-3.070-8.670A2 2 0 0 1 4.110 2h3a2 2 0 0 1 2 1.720 12.840 12.840 0 0 0 .7 2.810 2 2 0 0 1-.45 2.110L8.090 9.910a16 16 0 0 0 6 6l1.270-1.270a2 2 0 0 1 2.110-.45 12.840 12.840 0 0 0 2.810.7A2 2 0 0 1 22 16.920z"/></svg><svg class="ic" style="left:38.4px;top:1.2px;width:17.6px;height:17.6px" viewBox="0 0 24 24" stroke-width="2"><path d="M7.700 19.250A8.600 8.600 0 1 0 4.550 16.100L3.400 20.600z"/><path d="M7.200 11.900h.01M12 11.900h.01M16.800 11.900h.01" stroke-width="2.300"/></svg><svg class="ic" style="left:66.55px;top:0.15px;width:19.7px;height:19.7px" viewBox="0 0 24 24" stroke-width="1.85"><path d="M7 3h5c.512 0 1.024.195 1.414.586l7 7a2 2 0 0 1 0 2.828l-7 7a2 2 0 0 1-2.828 0l-7-7A1.994 1.994 0 0 1 3 12V7a4 4 0 0 1 4-4z"/><path d="M8.200 8.600h.01" stroke-width="2.300"/></svg><b class="bd" style="left:75.85px">5</b><svg class="ic" style="left:95.9px;top:1.2px;width:17.6px;height:17.6px" viewBox="0 0 24 24" stroke-width="2"><path d="M14 2H7a2.500 2.500 0 0 0-2.500 2.500v15A2.500 2.500 0 0 0 7 22h10.500a2.500 2.500 0 0 0 2.500-2.500V8z"/><path d="M14 2v4a2 2 0 0 0 2 2h4"/><path d="M8.700 13.200h8.200M8.700 16.900h6" stroke-width="1.900"/></svg><svg class="ic" style="left:125.4px;top:1.2px;width:17.6px;height:17.6px" viewBox="0 0 24 24" stroke-width="2"><rect x="3" y="3" width="18" height="18" rx="3.500"/><path d="M8.300 12.600l3.400 2.900L17.600 9.200"/></svg><svg class="ic" style="left:154.4px;top:1.2px;width:17.6px;height:17.6px" viewBox="0 0 24 24" stroke-width="2"><rect x="3" y="4.300" width="18" height="17.700" rx="3"/><path d="M7.900 1.800v4.600M16.100 1.800v4.600M3 9.200h18M12 12.200v6.600M8.700 15.500h6.600"/></svg></div></div>
<div class="card"><div class="nm" style="letter-spacing:0.39px">Melanie Brown</div><div class="ux"><svg viewBox="0 0 26 26"><circle cx="12.200" cy="9.700" r="2.650"/><path d="M7.400 17.300v-.2a2.800 2.800 0 0 1 2.800-2.800h3.400"/><path d="M15.800 14.600l2.800 2.800M18.600 14.600l-2.800 2.800" stroke-width="1.500"/></svg></div><div class="sb">registration - virtual workshop (adrian...</div><div class="pr">$0.00</div><div class="icons"><svg class="ic" style="left:9.2px;top:1.5px;width:17.4px;height:17.4px" viewBox="0 0 24 24" stroke-width="2"><path d="M15.050 5A5 5 0 0 1 19 8.950M15.050 1A9 9 0 0 1 23 8.940m-1 7.980v3a2 2 0 0 1-2.180 2 19.790 19.790 0 0 1-8.630-3.070 19.500 19.500 0 0 1-6-6 19.790 19.790 0 0 1-3.070-8.670A2 2 0 0 1 4.110 2h3a2 2 0 0 1 2 1.720 12.840 12.840 0 0 0 .7 2.810 2 2 0 0 1-.45 2.110L8.090 9.910a16 16 0 0 0 6 6l1.270-1.270a2 2 0 0 1 2.110-.45 12.840 12.840 0 0 0 2.810.7A2 2 0 0 1 22 16.920z"/></svg><svg class="ic" style="left:38.4px;top:1.2px;width:17.6px;height:17.6px" viewBox="0 0 24 24" stroke-width="2"><path d="M7.700 19.250A8.600 8.600 0 1 0 4.550 16.100L3.400 20.600z"/><path d="M7.200 11.900h.01M12 11.900h.01M16.800 11.900h.01" stroke-width="2.300"/></svg><svg class="ic" style="left:66.55px;top:0.15px;width:19.7px;height:19.7px" viewBox="0 0 24 24" stroke-width="1.85"><path d="M7 3h5c.512 0 1.024.195 1.414.586l7 7a2 2 0 0 1 0 2.828l-7 7a2 2 0 0 1-2.828 0l-7-7A1.994 1.994 0 0 1 3 12V7a4 4 0 0 1 4-4z"/><path d="M8.200 8.600h.01" stroke-width="2.300"/></svg><b class="bd" style="left:75.85px">7</b><svg class="ic" style="left:95.9px;top:1.2px;width:17.6px;height:17.6px" viewBox="0 0 24 24" stroke-width="2"><path d="M14 2H7a2.500 2.500 0 0 0-2.500 2.500v15A2.500 2.500 0 0 0 7 22h10.500a2.500 2.500 0 0 0 2.500-2.500V8z"/><path d="M14 2v4a2 2 0 0 0 2 2h4"/><path d="M8.700 13.200h8.200M8.700 16.900h6" stroke-width="1.900"/></svg><svg class="ic" style="left:125.4px;top:1.2px;width:17.6px;height:17.6px" viewBox="0 0 24 24" stroke-width="2"><rect x="3" y="3" width="18" height="18" rx="3.500"/><path d="M8.300 12.600l3.400 2.900L17.600 9.200"/></svg><svg class="ic" style="left:154.4px;top:1.2px;width:17.6px;height:17.6px" viewBox="0 0 24 24" stroke-width="2"><rect x="3" y="4.300" width="18" height="17.700" rx="3"/><path d="M7.900 1.800v4.600M16.100 1.800v4.600M3 9.200h18M12 12.200v6.600M8.700 15.500h6.600"/></svg></div></div>
<div class="card"><div class="nm" style="letter-spacing:0.45px">Marcel Asprilla</div><div class="ux"><svg viewBox="0 0 26 26"><circle cx="12.200" cy="9.700" r="2.650"/><path d="M7.400 17.300v-.2a2.800 2.800 0 0 1 2.800-2.800h3.400"/><path d="M15.800 14.600l2.800 2.800M18.600 14.600l-2.800 2.800" stroke-width="1.500"/></svg></div><div class="sb">registration - virtual workshop (adrian...</div><div class="pr">$0.00</div><div class="icons"><svg class="ic" style="left:9.2px;top:1.5px;width:17.4px;height:17.4px" viewBox="0 0 24 24" stroke-width="2"><path d="M15.050 5A5 5 0 0 1 19 8.950M15.050 1A9 9 0 0 1 23 8.940m-1 7.980v3a2 2 0 0 1-2.180 2 19.790 19.790 0 0 1-8.630-3.070 19.500 19.500 0 0 1-6-6 19.790 19.790 0 0 1-3.070-8.670A2 2 0 0 1 4.110 2h3a2 2 0 0 1 2 1.720 12.840 12.840 0 0 0 .7 2.810 2 2 0 0 1-.45 2.110L8.090 9.910a16 16 0 0 0 6 6l1.270-1.270a2 2 0 0 1 2.110-.45 12.840 12.840 0 0 0 2.810.7A2 2 0 0 1 22 16.920z"/></svg><svg class="ic" style="left:38.4px;top:1.2px;width:17.6px;height:17.6px" viewBox="0 0 24 24" stroke-width="2"><path d="M7.700 19.250A8.600 8.600 0 1 0 4.550 16.100L3.400 20.600z"/><path d="M7.200 11.900h.01M12 11.900h.01M16.800 11.900h.01" stroke-width="2.300"/></svg><svg class="ic" style="left:66.55px;top:0.15px;width:19.7px;height:19.7px" viewBox="0 0 24 24" stroke-width="1.85"><path d="M7 3h5c.512 0 1.024.195 1.414.586l7 7a2 2 0 0 1 0 2.828l-7 7a2 2 0 0 1-2.828 0l-7-7A1.994 1.994 0 0 1 3 12V7a4 4 0 0 1 4-4z"/><path d="M8.200 8.600h.01" stroke-width="2.300"/></svg><b class="bd" style="left:75.85px">5</b><svg class="ic" style="left:95.9px;top:1.2px;width:17.6px;height:17.6px" viewBox="0 0 24 24" stroke-width="2"><path d="M14 2H7a2.500 2.500 0 0 0-2.500 2.500v15A2.500 2.500 0 0 0 7 22h10.500a2.500 2.500 0 0 0 2.500-2.500V8z"/><path d="M14 2v4a2 2 0 0 0 2 2h4"/><path d="M8.700 13.200h8.200M8.700 16.900h6" stroke-width="1.900"/></svg><svg class="ic" style="left:125.4px;top:1.2px;width:17.6px;height:17.6px" viewBox="0 0 24 24" stroke-width="2"><rect x="3" y="3" width="18" height="18" rx="3.500"/><path d="M8.300 12.600l3.400 2.900L17.600 9.200"/></svg><svg class="ic" style="left:154.4px;top:1.2px;width:17.6px;height:17.6px" viewBox="0 0 24 24" stroke-width="2"><rect x="3" y="4.300" width="18" height="17.700" rx="3"/><path d="M7.900 1.800v4.600M16.100 1.800v4.600M3 9.200h18M12 12.200v6.600M8.700 15.500h6.600"/></svg></div></div>
</div></div>
<div class="col" style="left:1010.5px">
<div class="ch" style="border-top-color:#9fb5f8"><div class="ct">Trial Opt In</div><div class="cs"><span>696 Opportunities</span><b>$1,000.00</b></div></div>
<div class="cards">
<div class="card"><div class="nm">harsh shah</div><div class="ux"><svg viewBox="0 0 26 26"><circle cx="12.200" cy="9.700" r="2.650"/><path d="M7.400 17.300v-.2a2.800 2.800 0 0 1 2.800-2.800h3.400"/><path d="M15.800 14.600l2.800 2.800M18.600 14.600l-2.800 2.800" stroke-width="1.500"/></svg></div><div class="sb" style="letter-spacing:-0.27px">Adrian Brambila VW</div><div class="pr">$1,000.00</div><div class="icons"><svg class="ic" style="left:9.2px;top:1.5px;width:17.4px;height:17.4px" viewBox="0 0 24 24" stroke-width="2"><path d="M15.050 5A5 5 0 0 1 19 8.950M15.050 1A9 9 0 0 1 23 8.940m-1 7.980v3a2 2 0 0 1-2.180 2 19.790 19.790 0 0 1-8.630-3.070 19.500 19.500 0 0 1-6-6 19.790 19.790 0 0 1-3.070-8.670A2 2 0 0 1 4.110 2h3a2 2 0 0 1 2 1.720 12.840 12.840 0 0 0 .7 2.810 2 2 0 0 1-.45 2.110L8.090 9.910a16 16 0 0 0 6 6l1.270-1.270a2 2 0 0 1 2.110-.45 12.840 12.840 0 0 0 2.810.7A2 2 0 0 1 22 16.920z"/></svg><svg class="ic" style="left:38.4px;top:1.2px;width:17.6px;height:17.6px" viewBox="0 0 24 24" stroke-width="2"><path d="M7.700 19.250A8.600 8.600 0 1 0 4.550 16.100L3.400 20.600z"/><path d="M7.200 11.900h.01M12 11.900h.01M16.800 11.900h.01" stroke-width="2.300"/></svg><svg class="ic" style="left:66.55px;top:0.15px;width:19.7px;height:19.7px" viewBox="0 0 24 24" stroke-width="1.85"><path d="M7 3h5c.512 0 1.024.195 1.414.586l7 7a2 2 0 0 1 0 2.828l-7 7a2 2 0 0 1-2.828 0l-7-7A1.994 1.994 0 0 1 3 12V7a4 4 0 0 1 4-4z"/><path d="M8.200 8.600h.01" stroke-width="2.300"/></svg><b class="bd" style="left:75.85px">1</b><svg class="ic" style="left:95.9px;top:1.2px;width:17.6px;height:17.6px" viewBox="0 0 24 24" stroke-width="2"><path d="M14 2H7a2.500 2.500 0 0 0-2.500 2.500v15A2.500 2.500 0 0 0 7 22h10.500a2.500 2.500 0 0 0 2.500-2.500V8z"/><path d="M14 2v4a2 2 0 0 0 2 2h4"/><path d="M8.700 13.200h8.200M8.700 16.900h6" stroke-width="1.900"/></svg><svg class="ic" style="left:125.4px;top:1.2px;width:17.6px;height:17.6px" viewBox="0 0 24 24" stroke-width="2"><rect x="3" y="3" width="18" height="18" rx="3.500"/><path d="M8.300 12.600l3.400 2.900L17.600 9.200"/></svg><svg class="ic" style="left:154.4px;top:1.2px;width:17.6px;height:17.6px" viewBox="0 0 24 24" stroke-width="2"><rect x="3" y="4.300" width="18" height="17.700" rx="3"/><path d="M7.900 1.800v4.600M16.100 1.800v4.600M3 9.200h18M12 12.200v6.600M8.700 15.500h6.600"/></svg></div></div>
<div class="card"><div class="nm" style="letter-spacing:0.41px">Shubham Sukhwani</div><div class="ux"><svg viewBox="0 0 26 26"><circle cx="12.200" cy="9.700" r="2.650"/><path d="M7.400 17.300v-.2a2.800 2.800 0 0 1 2.800-2.800h3.400"/><path d="M15.800 14.600l2.800 2.800M18.600 14.600l-2.800 2.800" stroke-width="1.500"/></svg></div><div class="sb" style="letter-spacing:-0.27px">Adrian Brambila VW</div><div class="pr">$0.00</div><div class="icons"><svg class="ic" style="left:9.2px;top:1.5px;width:17.4px;height:17.4px" viewBox="0 0 24 24" stroke-width="2"><path d="M15.050 5A5 5 0 0 1 19 8.950M15.050 1A9 9 0 0 1 23 8.940m-1 7.980v3a2 2 0 0 1-2.180 2 19.790 19.790 0 0 1-8.630-3.070 19.500 19.500 0 0 1-6-6 19.790 19.790 0 0 1-3.070-8.670A2 2 0 0 1 4.110 2h3a2 2 0 0 1 2 1.720 12.840 12.840 0 0 0 .7 2.810 2 2 0 0 1-.45 2.110L8.090 9.910a16 16 0 0 0 6 6l1.270-1.270a2 2 0 0 1 2.110-.45 12.840 12.840 0 0 0 2.810.7A2 2 0 0 1 22 16.920z"/></svg><svg class="ic" style="left:38.4px;top:1.2px;width:17.6px;height:17.6px" viewBox="0 0 24 24" stroke-width="2"><path d="M7.700 19.250A8.600 8.600 0 1 0 4.550 16.100L3.400 20.600z"/><path d="M7.200 11.900h.01M12 11.900h.01M16.800 11.900h.01" stroke-width="2.300"/></svg><svg class="ic" style="left:66.55px;top:0.15px;width:19.7px;height:19.7px" viewBox="0 0 24 24" stroke-width="1.85"><path d="M7 3h5c.512 0 1.024.195 1.414.586l7 7a2 2 0 0 1 0 2.828l-7 7a2 2 0 0 1-2.828 0l-7-7A1.994 1.994 0 0 1 3 12V7a4 4 0 0 1 4-4z"/><path d="M8.200 8.600h.01" stroke-width="2.300"/></svg><b class="bd" style="left:75.85px">1</b><svg class="ic" style="left:95.9px;top:1.2px;width:17.6px;height:17.6px" viewBox="0 0 24 24" stroke-width="2"><path d="M14 2H7a2.500 2.500 0 0 0-2.500 2.500v15A2.500 2.500 0 0 0 7 22h10.500a2.500 2.500 0 0 0 2.500-2.500V8z"/><path d="M14 2v4a2 2 0 0 0 2 2h4"/><path d="M8.700 13.200h8.200M8.700 16.900h6" stroke-width="1.900"/></svg><svg class="ic" style="left:125.4px;top:1.2px;width:17.6px;height:17.6px" viewBox="0 0 24 24" stroke-width="2"><rect x="3" y="3" width="18" height="18" rx="3.500"/><path d="M8.300 12.600l3.400 2.900L17.600 9.200"/></svg><svg class="ic" style="left:154.4px;top:1.2px;width:17.6px;height:17.6px" viewBox="0 0 24 24" stroke-width="2"><rect x="3" y="4.300" width="18" height="17.700" rx="3"/><path d="M7.900 1.800v4.600M16.100 1.800v4.600M3 9.200h18M12 12.200v6.600M8.700 15.500h6.600"/></svg></div></div>
<div class="card"><div class="nm">Azra Sultana</div><div class="ux"><svg viewBox="0 0 26 26"><circle cx="12.200" cy="9.700" r="2.650"/><path d="M7.400 17.300v-.2a2.800 2.800 0 0 1 2.800-2.800h3.400"/><path d="M15.800 14.600l2.800 2.800M18.600 14.600l-2.800 2.800" stroke-width="1.500"/></svg></div><div class="sb" style="letter-spacing:-0.27px">Adrian Brambila VW</div><div class="pr">$0.00</div><div class="icons"><svg class="ic" style="left:9.2px;top:1.5px;width:17.4px;height:17.4px" viewBox="0 0 24 24" stroke-width="2"><path d="M15.050 5A5 5 0 0 1 19 8.950M15.050 1A9 9 0 0 1 23 8.940m-1 7.980v3a2 2 0 0 1-2.180 2 19.790 19.790 0 0 1-8.630-3.070 19.500 19.500 0 0 1-6-6 19.790 19.790 0 0 1-3.070-8.670A2 2 0 0 1 4.110 2h3a2 2 0 0 1 2 1.720 12.840 12.840 0 0 0 .7 2.810 2 2 0 0 1-.45 2.110L8.090 9.910a16 16 0 0 0 6 6l1.270-1.270a2 2 0 0 1 2.110-.45 12.840 12.840 0 0 0 2.810.7A2 2 0 0 1 22 16.920z"/></svg><svg class="ic" style="left:38.4px;top:1.2px;width:17.6px;height:17.6px" viewBox="0 0 24 24" stroke-width="2"><path d="M7.700 19.250A8.600 8.600 0 1 0 4.550 16.100L3.400 20.600z"/><path d="M7.200 11.900h.01M12 11.900h.01M16.800 11.900h.01" stroke-width="2.300"/></svg><svg class="ic" style="left:66.55px;top:0.15px;width:19.7px;height:19.7px" viewBox="0 0 24 24" stroke-width="1.85"><path d="M7 3h5c.512 0 1.024.195 1.414.586l7 7a2 2 0 0 1 0 2.828l-7 7a2 2 0 0 1-2.828 0l-7-7A1.994 1.994 0 0 1 3 12V7a4 4 0 0 1 4-4z"/><path d="M8.200 8.600h.01" stroke-width="2.300"/></svg><b class="bd" style="left:75.85px">1</b><svg class="ic" style="left:95.9px;top:1.2px;width:17.6px;height:17.6px" viewBox="0 0 24 24" stroke-width="2"><path d="M14 2H7a2.500 2.500 0 0 0-2.500 2.500v15A2.500 2.500 0 0 0 7 22h10.500a2.500 2.500 0 0 0 2.500-2.500V8z"/><path d="M14 2v4a2 2 0 0 0 2 2h4"/><path d="M8.700 13.200h8.200M8.700 16.900h6" stroke-width="1.900"/></svg><svg class="ic" style="left:125.4px;top:1.2px;width:17.6px;height:17.6px" viewBox="0 0 24 24" stroke-width="2"><rect x="3" y="3" width="18" height="18" rx="3.500"/><path d="M8.300 12.600l3.400 2.900L17.600 9.200"/></svg><svg class="ic" style="left:154.4px;top:1.2px;width:17.6px;height:17.6px" viewBox="0 0 24 24" stroke-width="2"><rect x="3" y="4.300" width="18" height="17.700" rx="3"/><path d="M7.900 1.800v4.600M16.100 1.800v4.600M3 9.200h18M12 12.200v6.600M8.700 15.500h6.600"/></svg></div></div>
<div class="card"><div class="nm" style="letter-spacing:0.54px">mustufa shehzad</div><div class="ux"><svg viewBox="0 0 26 26"><circle cx="12.200" cy="9.700" r="2.650"/><path d="M7.400 17.300v-.2a2.800 2.800 0 0 1 2.800-2.800h3.400"/><path d="M15.800 14.600l2.800 2.800M18.600 14.600l-2.800 2.800" stroke-width="1.500"/></svg></div><div class="sb" style="letter-spacing:-0.27px">Adrian Brambila VW</div><div class="pr">$0.00</div><div class="icons"><svg class="ic" style="left:9.2px;top:1.5px;width:17.4px;height:17.4px" viewBox="0 0 24 24" stroke-width="2"><path d="M15.050 5A5 5 0 0 1 19 8.950M15.050 1A9 9 0 0 1 23 8.940m-1 7.980v3a2 2 0 0 1-2.180 2 19.790 19.790 0 0 1-8.630-3.070 19.500 19.500 0 0 1-6-6 19.790 19.790 0 0 1-3.070-8.670A2 2 0 0 1 4.110 2h3a2 2 0 0 1 2 1.720 12.840 12.840 0 0 0 .7 2.810 2 2 0 0 1-.45 2.110L8.090 9.910a16 16 0 0 0 6 6l1.270-1.270a2 2 0 0 1 2.110-.45 12.840 12.840 0 0 0 2.810.7A2 2 0 0 1 22 16.920z"/></svg><svg class="ic" style="left:38.4px;top:1.2px;width:17.6px;height:17.6px" viewBox="0 0 24 24" stroke-width="2"><path d="M7.700 19.250A8.600 8.600 0 1 0 4.550 16.100L3.400 20.600z"/><path d="M7.200 11.900h.01M12 11.900h.01M16.800 11.900h.01" stroke-width="2.300"/></svg><svg class="ic" style="left:66.55px;top:0.15px;width:19.7px;height:19.7px" viewBox="0 0 24 24" stroke-width="1.85"><path d="M7 3h5c.512 0 1.024.195 1.414.586l7 7a2 2 0 0 1 0 2.828l-7 7a2 2 0 0 1-2.828 0l-7-7A1.994 1.994 0 0 1 3 12V7a4 4 0 0 1 4-4z"/><path d="M8.200 8.600h.01" stroke-width="2.300"/></svg><b class="bd" style="left:75.85px">1</b><svg class="ic" style="left:95.9px;top:1.2px;width:17.6px;height:17.6px" viewBox="0 0 24 24" stroke-width="2"><path d="M14 2H7a2.500 2.500 0 0 0-2.500 2.500v15A2.500 2.500 0 0 0 7 22h10.500a2.500 2.500 0 0 0 2.500-2.500V8z"/><path d="M14 2v4a2 2 0 0 0 2 2h4"/><path d="M8.700 13.200h8.200M8.700 16.900h6" stroke-width="1.900"/></svg><svg class="ic" style="left:125.4px;top:1.2px;width:17.6px;height:17.6px" viewBox="0 0 24 24" stroke-width="2"><rect x="3" y="3" width="18" height="18" rx="3.500"/><path d="M8.300 12.600l3.400 2.900L17.600 9.200"/></svg><svg class="ic" style="left:154.4px;top:1.2px;width:17.6px;height:17.6px" viewBox="0 0 24 24" stroke-width="2"><rect x="3" y="4.300" width="18" height="17.700" rx="3"/><path d="M7.900 1.800v4.600M16.100 1.800v4.600M3 9.200h18M12 12.200v6.600M8.700 15.500h6.600"/></svg></div></div>
<div class="card"><div class="nm" style="letter-spacing:0.33px">Kamiko McGhee Thacker</div><div class="ux"><svg viewBox="0 0 26 26"><circle cx="12.200" cy="9.700" r="2.650"/><path d="M7.400 17.300v-.2a2.800 2.800 0 0 1 2.800-2.800h3.400"/><path d="M15.800 14.600l2.800 2.800M18.600 14.600l-2.800 2.800" stroke-width="1.500"/></svg></div><div class="sb" style="letter-spacing:-0.27px">Adrian Brambila VW</div><div class="pr">$0.00</div><div class="icons"><svg class="ic" style="left:9.2px;top:1.5px;width:17.4px;height:17.4px" viewBox="0 0 24 24" stroke-width="2"><path d="M15.050 5A5 5 0 0 1 19 8.950M15.050 1A9 9 0 0 1 23 8.940m-1 7.980v3a2 2 0 0 1-2.180 2 19.790 19.790 0 0 1-8.630-3.070 19.500 19.500 0 0 1-6-6 19.790 19.790 0 0 1-3.070-8.670A2 2 0 0 1 4.110 2h3a2 2 0 0 1 2 1.720 12.840 12.840 0 0 0 .7 2.810 2 2 0 0 1-.45 2.110L8.090 9.910a16 16 0 0 0 6 6l1.270-1.270a2 2 0 0 1 2.110-.45 12.840 12.840 0 0 0 2.810.7A2 2 0 0 1 22 16.920z"/></svg><svg class="ic" style="left:38.4px;top:1.2px;width:17.6px;height:17.6px" viewBox="0 0 24 24" stroke-width="2"><path d="M7.700 19.250A8.600 8.600 0 1 0 4.550 16.100L3.400 20.600z"/><path d="M7.200 11.900h.01M12 11.900h.01M16.800 11.900h.01" stroke-width="2.300"/></svg><svg class="ic" style="left:66.55px;top:0.15px;width:19.7px;height:19.7px" viewBox="0 0 24 24" stroke-width="1.85"><path d="M7 3h5c.512 0 1.024.195 1.414.586l7 7a2 2 0 0 1 0 2.828l-7 7a2 2 0 0 1-2.828 0l-7-7A1.994 1.994 0 0 1 3 12V7a4 4 0 0 1 4-4z"/><path d="M8.200 8.600h.01" stroke-width="2.300"/></svg><b class="bd" style="left:75.85px">1</b><svg class="ic" style="left:95.9px;top:1.2px;width:17.6px;height:17.6px" viewBox="0 0 24 24" stroke-width="2"><path d="M14 2H7a2.500 2.500 0 0 0-2.500 2.500v15A2.500 2.500 0 0 0 7 22h10.500a2.500 2.500 0 0 0 2.500-2.500V8z"/><path d="M14 2v4a2 2 0 0 0 2 2h4"/><path d="M8.700 13.200h8.200M8.700 16.900h6" stroke-width="1.900"/></svg><svg class="ic" style="left:125.4px;top:1.2px;width:17.6px;height:17.6px" viewBox="0 0 24 24" stroke-width="2"><rect x="3" y="3" width="18" height="18" rx="3.500"/><path d="M8.300 12.600l3.400 2.900L17.600 9.200"/></svg><svg class="ic" style="left:154.4px;top:1.2px;width:17.6px;height:17.6px" viewBox="0 0 24 24" stroke-width="2"><rect x="3" y="4.300" width="18" height="17.700" rx="3"/><path d="M7.900 1.800v4.600M16.100 1.800v4.600M3 9.200h18M12 12.200v6.600M8.700 15.500h6.600"/></svg></div></div>
</div></div>
</div>
<div class="gdot"></div>
</body></html>
